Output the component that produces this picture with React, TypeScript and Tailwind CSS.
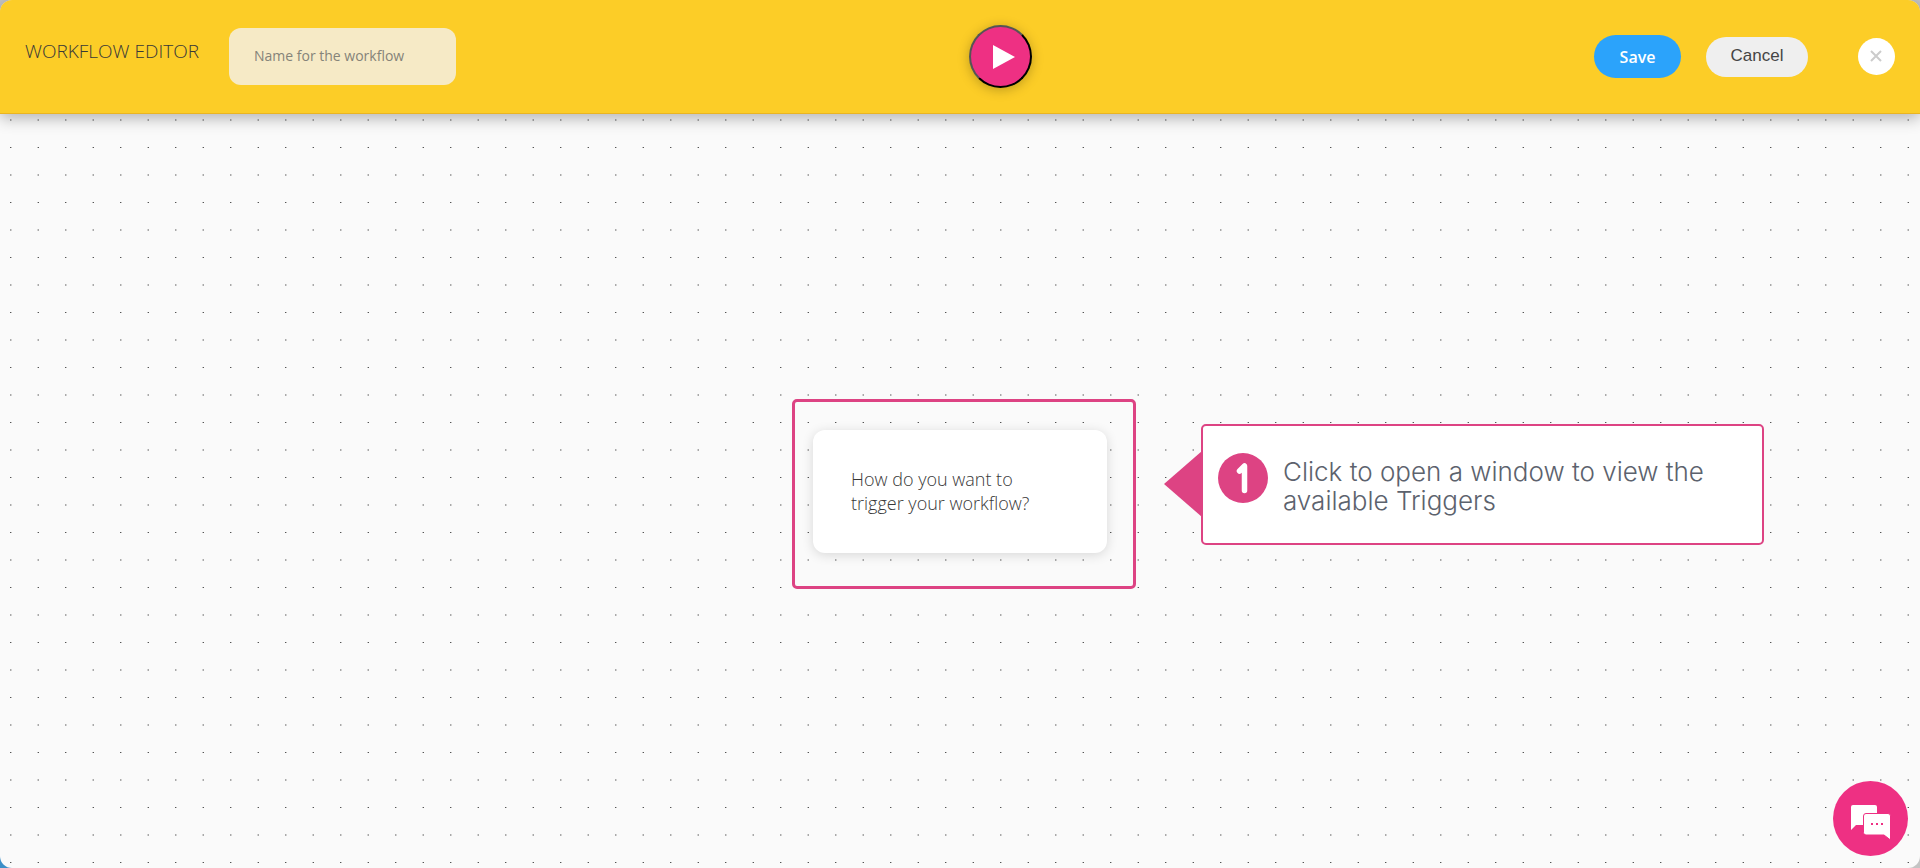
import React from "react";

function DotGrid() {
  return (
    <svg className="absolute inset-0 h-full w-full" aria-hidden="true">
      <defs>
        <pattern id="dots" x="10" y="5" width="55" height="55" patternUnits="userSpaceOnUse">
          <rect x="0" y="0" width="1" height="2" fill="#a9a9a9" />
          <rect x="1" y="0" width="1" height="2" fill="#d4d4d4" />
          <rect x="28" y="0" width="1" height="2" fill="#a9a9a9" />
          <rect x="27" y="0" width="1" height="2" fill="#d4d4d4" />
          <rect x="0" y="28" width="1" height="1" fill="#555" />
          <rect x="1" y="28" width="1" height="1" fill="#bbb" />
          <rect x="28" y="28" width="1" height="1" fill="#555" />
          <rect x="27" y="28" width="1" height="1" fill="#bbb" />
        </pattern>
      </defs>
      <rect width="100%" height="100%" fill="url(#dots)" />
    </svg>
  );
}

function Toolbar() {
  return (
    <header className="relative z-10 grid h-[114px] shrink-0 grid-cols-[1fr_auto_1fr] items-center rounded-t-xl border-b border-[#eab421] bg-[#fccd27] px-[25px] shadow-[0_4px_16px_rgba(0,0,0,0.3)]">
      <div className="flex items-center gap-8">
        <h1 className="w-[172px] pb-[11px] text-[19px] leading-6 font-light whitespace-nowrap text-[#383838]">WORKFLOW EDITOR</h1>
        <input
          aria-label="Workflow name"
          placeholder="Name for the workflow"
          className="h-[57px] w-[227px] rounded-xl bg-[#f6eac6] px-[25px] pb-[2px] text-[14px] text-[#454545] outline-none placeholder:text-[#858379]"
        />
      </div>
      <button
        aria-label="Run workflow"
        className="ml-20 flex size-[63px] items-center justify-center rounded-full border-2 border-t-[#555] border-r-black border-b-black border-l-[#555] bg-[#ee3083] shadow-[0_2px_12px_rgba(0,0,0,0.25)]"
      >
        <svg viewBox="0 0 22 24" className="ml-2 h-6 w-[22px]" fill="#fff" aria-hidden="true">
          <path d="M0 0 22 12 0 24Z" />
        </svg>
      </button>
      <div className="flex items-center justify-end gap-[25px]">
        <button className="h-[43px] w-[87px] rounded-full bg-[#2ba3fb] text-[16px] font-semibold text-white">Save</button>
        <button className="h-10 w-[102px] rounded-full bg-[#efefef] pb-[2px] font-['Liberation_Sans',sans-serif] text-[17px] text-[#454545]">
          Cancel
        </button>
        <button aria-label="Close" className="ml-[25px] flex size-[37px] items-center justify-center rounded-full bg-white">
          <svg viewBox="0 0 12 12" className="mr-0.5 mb-0.5 size-3" stroke="#ccc" strokeWidth="2" aria-hidden="true">
            <path d="M1 1 11 11M11 1 1 11" />
          </svg>
        </button>
      </div>
    </header>
  );
}

function TriggerNode() {
  return (
    <div className="absolute top-[285px] left-[792px] rounded-[5px] border-[3px] border-[#dd4383] pt-7 pr-[26px] pb-[33px] pl-[18px]">
      <button className="block h-[123px] w-[294px] rounded-xl bg-white pr-16 pb-[2px] pl-[38px] text-left text-[18px] leading-6 font-light text-[#383838] shadow-[0_2px_12px_rgba(0,0,0,0.14)]">
        How do you want to trigger your workflow?
      </button>
    </div>
  );
}

function Callout() {
  return (
    <div className="absolute top-[310px] left-[1164px] flex items-start">
      <svg viewBox="0 0 38 66" className="mt-[27px] -mr-px h-[66px] w-[38px]" fill="#dd4383" aria-hidden="true">
        <path d="M0 33 38 0V66Z" />
      </svg>
      <div className="flex h-[121px] w-[563px] items-start gap-[15px] rounded-[5px] border-2 border-[#dd4383] bg-white pt-[27px] pl-[15px]">
        <svg viewBox="0 0 50 50" className="size-[50px] shrink-0" role="img" aria-label="Step 1">
          <circle cx="25" cy="25" r="25" fill="#dd4383" />
          <path d="M21.500 18 26.500 13V37.500" fill="none" stroke="#fff" strokeWidth="5.500" strokeLinecap="round" strokeLinejoin="round" />
        </svg>
        <p className="w-[440px] pt-1 font-['Inter',sans-serif] text-[26px] leading-[29px] font-light text-[#5c626d]">
          Click to open a window to view the available Triggers
        </p>
      </div>
    </div>
  );
}

function ChatButton() {
  return (
    <button aria-label="Open chat" className="fixed right-3 bottom-3 flex size-[75px] items-center justify-center rounded-full bg-[#ee3083]">
      <svg viewBox="0 0 75 75" className="size-[75px]" aria-hidden="true">
        <path d="M20 24H42Q44 24 44 26V44H23L18 49V26Q18 24 20 24Z" fill="#fff" />
        <path d="M33 32.500H55Q57.500 32.500 57.500 35V59L51 54H33Q30.500 54 30.500 51.500V35Q30.500 32.500 33 32.500Z" fill="#fff" stroke="#ee3083" />
        <path d="M38 42h2v2h-2zM43 42h2v2h-2zM48 42h2v2h-2z" fill="#ee3083" />
      </svg>
    </button>
  );
}

export default function App() {
  return (
    <div className="min-h-screen bg-linear-to-tr from-[#3d8fc8] from-1% to-[#c4c4c4] to-1% font-['Open_Sans',sans-serif]">
      <div className="flex min-h-screen flex-col rounded-xl bg-[#fafafa]">
        <Toolbar />
        <main className="relative grow overflow-hidden rounded-b-xl">
          <DotGrid />
          <TriggerNode />
          <Callout />
        </main>
      </div>
      <ChatButton />
    </div>
  );
}
